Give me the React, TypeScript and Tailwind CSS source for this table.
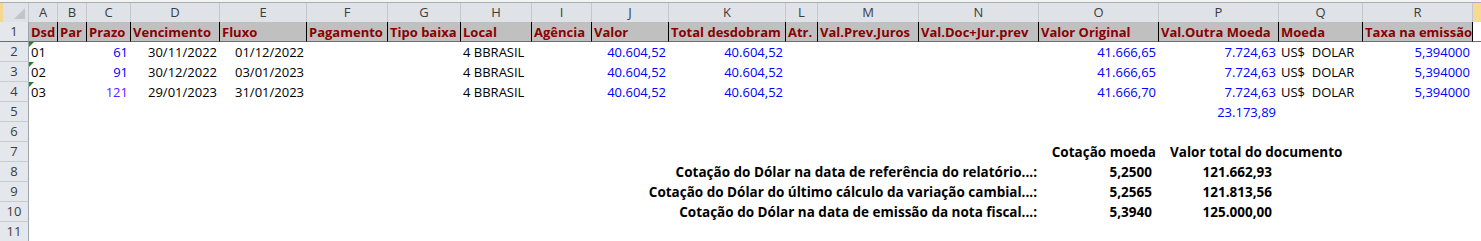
import React from 'react';

const W = [
  'w-[29px]', 'w-[29px]', 'w-[29px]', 'w-[44px]', 'w-[89px]', 'w-[87px]', 'w-[81px]', 'w-[73px]',
  'w-[71px]', 'w-[60px]', 'w-[77px]', 'w-[117px]', 'w-[32px]', 'w-[101px]', 'w-[120px]', 'w-[120px]',
  'w-[120px]', 'w-[84px]', 'w-[110px]', 'w-[8px]',
];

const LETTERS = ['A', 'B', 'C', 'D', 'E', 'F', 'G', 'H', 'I', 'J', 'K', 'L', 'M', 'N', 'O', 'P', 'Q', 'R', ''];

const HEADERS = [
  'Dsd', 'Par', 'Prazo', 'Vencimento', 'Fluxo', 'Pagamento', 'Tipo baixa', 'Local', 'Agência', 'Valor',
  'Total desdobram', 'Atr.', 'Val.Prev.Juros', 'Val.Doc+Jur.prev', 'Valor Original', 'Val.Outra Moeda',
  'Moeda', 'Taxa na emissão',
];

type Cell = {
  t: string;
  a?: 'l' | 'r';
  c?: string;
  b?: boolean;
  tri?: boolean;
  p?: string;
};

const B = 'text-[#0000ff]';

const ROWS: Record<number, Record<number, Cell>> = {
  2: {
    0: { t: '01', tri: true },
    2: { t: '61', a: 'r', c: B },
    3: { t: '30/11/2022', a: 'r' },
    4: { t: '01/12/2022', a: 'r' },
    7: { t: '4 BBRASIL' },
    9: { t: '40.604,52', a: 'r', c: B },
    10: { t: '40.604,52', a: 'r', c: B },
    14: { t: '41.666,65', a: 'r', c: B },
    15: { t: '7.724,63', a: 'r', c: B },
    16: { t: 'US$\u00a0\u00a0DOLAR' },
    17: { t: '5,394000', a: 'r', c: B },
  },
  3: {
    0: { t: '02', tri: true },
    2: { t: '91', a: 'r', c: B },
    3: { t: '30/12/2022', a: 'r' },
    4: { t: '03/01/2023', a: 'r' },
    7: { t: '4 BBRASIL' },
    9: { t: '40.604,52', a: 'r', c: B },
    10: { t: '40.604,52', a: 'r', c: B },
    14: { t: '41.666,65', a: 'r', c: B },
    15: { t: '7.724,63', a: 'r', c: B },
    16: { t: 'US$\u00a0\u00a0DOLAR' },
    17: { t: '5,394000', a: 'r', c: B },
  },
  4: {
    0: { t: '03', tri: true },
    2: { t: '121', a: 'r', c: 'text-[#5a1fff]' },
    3: { t: '29/01/2023', a: 'r' },
    4: { t: '31/01/2023', a: 'r' },
    7: { t: '4 BBRASIL' },
    9: { t: '40.604,52', a: 'r', c: B },
    10: { t: '40.604,52', a: 'r', c: B },
    14: { t: '41.666,70', a: 'r', c: B },
    15: { t: '7.724,63', a: 'r', c: B },
    16: { t: 'US$\u00a0\u00a0DOLAR' },
    17: { t: '5,394000', a: 'r', c: B },
  },
  5: {
    15: { t: '23.173,89', a: 'r', c: B },
  },
  7: {
    14: { t: 'Cotação moeda', a: 'r', b: true },
    15: { t: 'Valor total do documento', b: true, p: 'pl-[11px]' },
  },
  8: {
    13: { t: 'Cotação do Dólar na data de referência do relatório...:', a: 'r', b: true, p: 'pr-[2px]' },
    14: { t: '5,2500', a: 'r', b: true, p: 'pr-[7px]' },
    15: { t: '121.662,93', a: 'r', b: true, p: 'pr-[7px]' },
  },
  9: {
    13: { t: 'Cotação do Dólar do último cálculo da variação cambial...:', a: 'r', b: true, p: 'pr-[2px]' },
    14: { t: '5,2565', a: 'r', b: true, p: 'pr-[7px]' },
    15: { t: '121.813,56', a: 'r', b: true, p: 'pr-[7px]' },
  },
  10: {
    13: { t: 'Cotação do Dólar na data de emissão da nota fiscal...:', a: 'r', b: true, p: 'pr-[2px]' },
    14: { t: '5,3940', a: 'r', b: true, p: 'pr-[7px]' },
    15: { t: '125.000,00', a: 'r', b: true, p: 'pr-[7px]' },
  },
};

function RowHeader({ n, dark }: { n: number; dark?: boolean }) {
  return (
    <div
      className={`${W[0]} shrink-0 h-full flex items-center justify-center bg-[#e4e8ed] border-r border-[#9ea4ab] border-b ${
        dark ? 'border-b-[#6e6e6e]' : 'border-b-[#c6cbd1]'
      } text-[13px] text-[#3c3c3c]`}
    >
      {n}
    </div>
  );
}

function DataRow({ n }: { n: number }) {
  const cells = ROWS[n] || {};
  return (
    <div className="flex h-[20px] shrink-0">
      <RowHeader n={n} />
      {W.slice(1).map((w, i) => {
        const c = cells[i];
        return (
          <div
            key={i}
            className={`${w} shrink-0 h-full relative flex items-center whitespace-nowrap overflow-visible ${
              c && c.a === 'r' ? 'justify-end' : 'justify-start'
            } ${c ? c.p ?? (c.a === 'r' ? 'pr-[3px]' : 'pl-[2px]') : ''} ${c?.c ?? 'text-black'} ${
              c?.b ? 'font-bold text-[13.5px]' : ''
            } pt-[1px]`}
          >
            {c?.tri && (
              <span className="absolute left-0 top-0 w-0 h-0 border-t-[5px] border-r-[5px] border-t-[#1e8a1e] border-r-transparent" />
            )}
            {c?.t}
          </div>
        );
      })}
    </div>
  );
}

export default function App() {
  return (
    <div className="w-[1481px] h-[241px] overflow-hidden bg-white flex flex-col text-[13px] leading-none font-['Open_Sans','Liberation_Sans',sans-serif]">
      <div className="h-[2px] shrink-0 bg-[#f3f3f3]" />
      {/* column letters */}
      <div className="flex h-[20px] shrink-0 border-t border-[#a9aeb4] bg-[#dfe3e8]">
        <div className={`${W[0]} shrink-0 h-full relative border-r border-[#c3c8ce]`}>
          <span className="absolute left-0 top-0 w-[3px] h-full bg-[#f5d78e]" />
          <svg className="absolute right-[3px] bottom-[3px]" width="11" height="11" viewBox="0 0 11 11">
            <polygon points="11,0 11,11 0,11" fill="#c1c6cc" />
          </svg>
        </div>
        {LETTERS.map((l, i) => (
          <div
            key={i}
            className={`${W[i + 1]} shrink-0 h-full flex items-center justify-center text-[#3c3c3c] ${
              i === 18 ? 'bg-[#f7d98f]' : 'border-r border-[#c3c8ce]'
            }`}
          >
            {l}
          </div>
        ))}
      </div>
      {/* header row 1 */}
      <div className="flex h-[20px] shrink-0">
        <RowHeader n={1} dark />
        {W.slice(1).map((w, i) => (
          <div
            key={i}
            className={`${w} shrink-0 h-full flex items-center whitespace-nowrap overflow-hidden pl-[2px] pt-[1px] font-bold text-[#8b0000] border-b border-b-[#6e6e6e] ${
              i === 18 ? 'bg-white' : 'bg-[#c0c0c0] border-r border-r-black'
            }`}
          >
            {HEADERS[i] ?? ''}
          </div>
        ))}
      </div>
      {[2, 3, 4, 5, 6, 7, 8, 9, 10, 11].map((n) => (
        <DataRow key={n} n={n} />
      ))}
    </div>
  );
}
